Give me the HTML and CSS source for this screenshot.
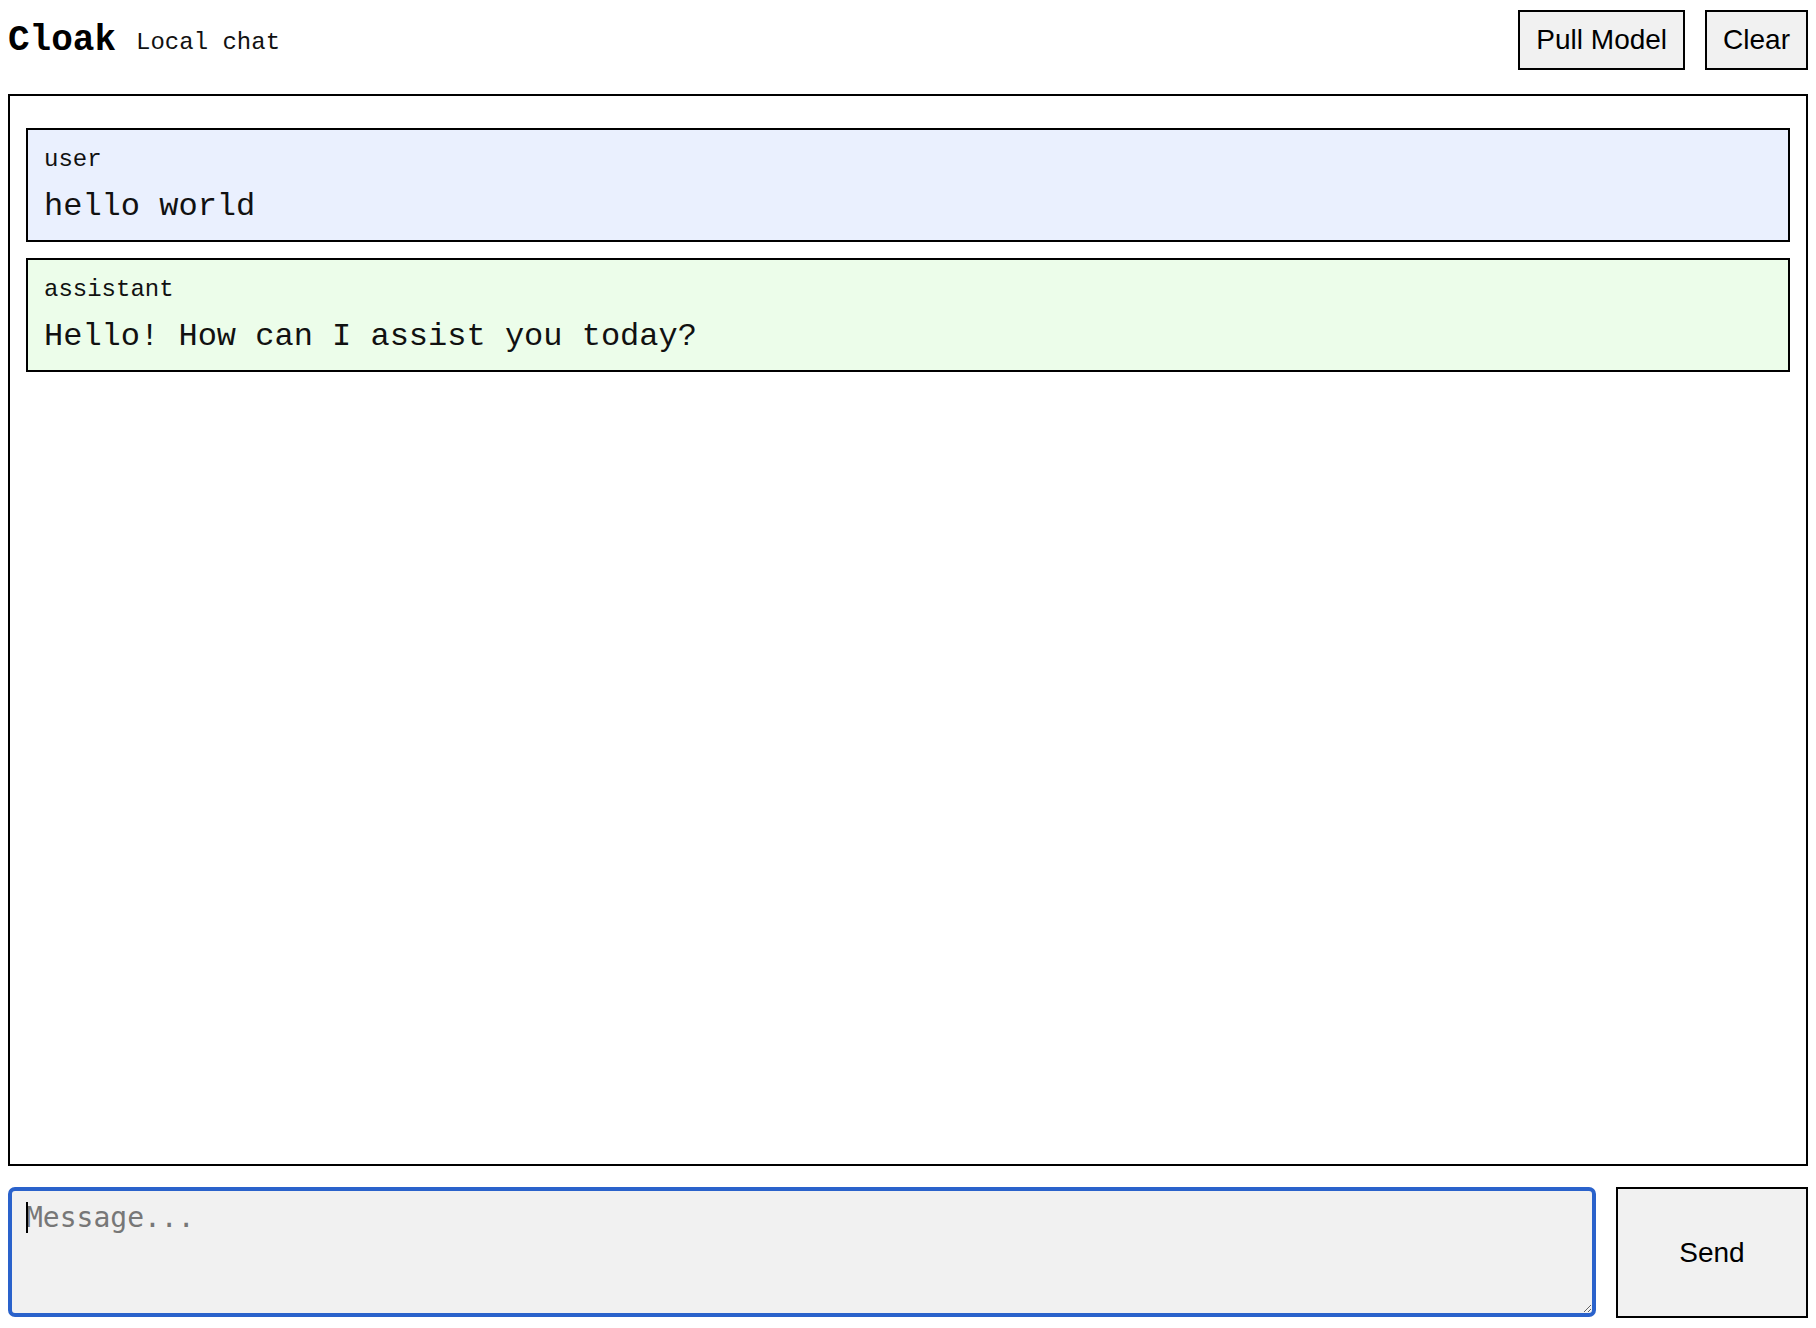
FILE: index.html
```html
<!DOCTYPE html>
<html lang="en">
<head>
<meta charset="utf-8">
<title>Cloak</title>
<link rel="stylesheet" href="styles.css">
</head>
<body>
<div class="app">
  <header class="topbar">
    <div class="brand">
      <h1 class="brand-name">Cloak</h1>
      <span class="brand-tag">Local chat</span>
    </div>
    <div class="actions">
      <button class="btn" type="button">Pull Model</button>
      <button class="btn" type="button">Clear</button>
    </div>
  </header>

  <main class="chat">
    <div class="msg msg-user">
      <div class="msg-role">user</div>
      <div class="msg-text">hello world</div>
    </div>
    <div class="msg msg-assistant">
      <div class="msg-role">assistant</div>
      <div class="msg-text">Hello! How can I assist you today?</div>
    </div>
  </main>

  <form class="composer">
    <div class="input-wrap">
      <textarea class="input" placeholder="Message..."></textarea>
      <span class="caret"></span>
    </div>
    <button class="btn send" type="button">Send</button>
  </form>
</div>
</body>
</html>
```

FILE: styles.css
```css
* {
  box-sizing: border-box;
}

html, body {
  height: 100%;
}

body {
  margin: 8px;
  background: #fff;
  color: #000;
  font-family: "Liberation Mono", "Courier New", monospace;
}

.app {
  height: calc(100vh - 18px);
  display: flex;
  flex-direction: column;
}

/* top bar */
.topbar {
  height: 64px;
  flex: none;
  display: flex;
  align-items: center;
  justify-content: space-between;
  margin-bottom: 22px;
}

.brand {
  display: flex;
  align-items: baseline;
  gap: 20px;
}

.brand-name {
  margin: 0;
  font-size: 36px;
  font-weight: bold;
  line-height: normal;
}

.brand-tag {
  font-size: 24px;
  color: #111;
  position: relative;
  top: -1px;
}

.actions {
  display: flex;
  gap: 20px;
}

.btn {
  font-family: "Liberation Sans", Arial, sans-serif;
  font-size: 28px;
  line-height: normal;
  color: #000;
  background: #f1f1f1;
  border: 2px solid #000;
  border-radius: 0;
  padding: 12px 16px;
  margin: 0;
  cursor: pointer;
}

/* conversation */
.chat {
  flex: 1;
  min-height: 0;
  border: 2px solid #000;
  padding: 32px 16px 16px;
  display: flex;
  flex-direction: column;
  gap: 16px;
  overflow: auto;
}

.msg {
  border: 2px solid #000;
  padding: 16px 16px 15px;
}

.msg-user {
  background: #eaf0fe;
}

.msg-assistant {
  background: #ecfdea;
}

.msg-role {
  font-size: 24px;
  color: #111;
  margin-bottom: 15px;
}

.msg-text {
  font-size: 32px;
  color: #111;
  white-space: pre-wrap;
}

/* message composer */
.composer {
  margin: 21px 0 0;
  height: 131px;
  flex: none;
  display: flex;
  gap: 20px;
}

.input-wrap {
  position: relative;
  flex: 1;
  display: flex;
}

.input {
  flex: 1;
  height: 130px;
  margin: 0;
  border: 4px solid #2a62cb;
  border-radius: 7px;
  background: #f1f1f1;
  padding: 10px 14px;
  font-family: "DejaVu Sans Mono", Menlo, monospace;
  font-size: 28px;
  color: #000;
  outline: none;
}

.input::placeholder {
  color: #777;
}

.caret {
  position: absolute;
  left: 18px;
  top: 15px;
  width: 2px;
  height: 31px;
  background: #000;
}

.send {
  width: 192px;
  flex: none;
  padding: 0;
}
```
